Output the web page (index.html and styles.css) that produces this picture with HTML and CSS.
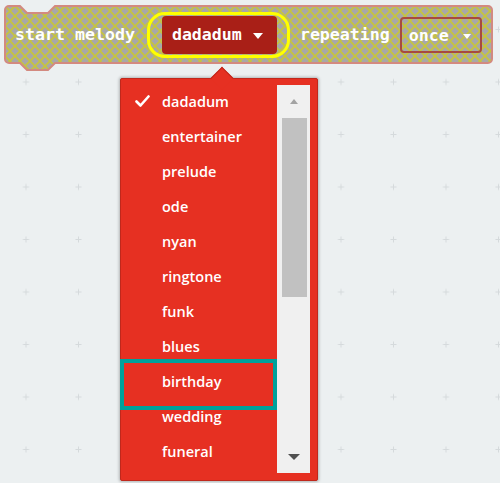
FILE: index.html
```html
<!DOCTYPE html>
<html>
<head>
<meta charset="utf-8">
<link rel="stylesheet" href="styles.css">
</head>
<body>
<div class="workspace">
  <svg class="grid" width="500" height="483">
    <defs>
      <pattern id="gridPat" x="-0.25" y="55.75" width="52.5" height="52.5" patternUnits="userSpaceOnUse">
        <path d="M23.25 26.25 H29.25 M26.25 23.25 V29.25" stroke="#d5dadc" stroke-width="1"/>
      </pattern>
    </defs>
    <rect width="500" height="483" fill="url(#gridPat)"/>
  </svg>

  <div class="block">
    <svg class="block-shape" width="491" height="70" viewBox="-2 -2 491 70">
      <defs>
        <pattern id="disabledPat" width="10" height="10" patternUnits="userSpaceOnUse">
          <rect width="10" height="10" fill="#a8a8a8"/>
          <path d="M0 0 L10 10 M10 0 L0 10" stroke="#c6c43e" stroke-width="1.7"/>
        </pattern>
      </defs>
      <path d="M0 4 A4 4 0 0 1 4 0 H15 L22 7 H43 L50 0 H483 A4 4 0 0 1 487 4 V53 A4 4 0 0 1 483 57 H50 L43 64 H22 L15 57 H4 A4 4 0 0 1 0 53 Z" fill="url(#disabledPat)" stroke="#d38a80" stroke-width="2"/>
    </svg>
    <div class="block-row">
      <span class="label">start melody</span>
      <span class="selected">
        <span class="field field-solid">dadadum<i class="caret"></i></span>
      </span>
      <span class="label">repeating</span>
      <span class="field field-outline">once<i class="caret"></i></span>
    </div>
  </div>

  <div class="dropdown">
    <div class="pointer"></div>
    <ul class="menu">
      <li class="item checked"><span class="check"><svg width="15" height="12" viewBox="0 0 15 12"><path d="M1.5 6.5 L5.5 10.5 L13.5 1.5" fill="none" stroke="#fff" stroke-width="2.6" stroke-linecap="round" stroke-linejoin="round"/></svg></span>dadadum</li>
      <li class="item"><span class="check"></span>entertainer</li>
      <li class="item"><span class="check"></span>prelude</li>
      <li class="item"><span class="check"></span>ode</li>
      <li class="item"><span class="check"></span>nyan</li>
      <li class="item"><span class="check"></span>ringtone</li>
      <li class="item"><span class="check"></span>funk</li>
      <li class="item"><span class="check"></span>blues</li>
      <li class="item"><span class="check"></span>birthday</li>
      <li class="item"><span class="check"></span>wedding</li>
      <li class="item"><span class="check"></span>funeral</li>
    </ul>
    <div class="scrollbar">
      <div class="sb-btn"><i class="arrow-up"></i></div>
      <div class="thumb"></div>
      <div class="sb-space"></div>
      <div class="sb-btn"><i class="arrow-down"></i></div>
    </div>
    <div class="highlight"></div>
  </div>
</div>
</body>
</html>
```

FILE: styles.css
```css
* { box-sizing: border-box; }

html, body {
  margin: 0;
  padding: 0;
}

body {
  width: 500px;
  height: 483px;
  overflow: hidden;
  background: #ecf0f1;
}

.workspace {
  position: relative;
  width: 500px;
  height: 483px;
}

.grid {
  position: absolute;
  left: 0;
  top: 0;
}

/* ---- block ---- */
.block {
  position: absolute;
  left: 5px;
  top: 6px;
  width: 487px;
  height: 57px;
}

.block-shape {
  position: absolute;
  left: -2px;
  top: -2px;
}

.block-row {
  position: relative;
  display: flex;
  align-items: center;
  height: 57px;
  padding-left: 10px;
  font-family: "DejaVu Sans Mono", "Liberation Mono", monospace;
  font-weight: bold;
  font-size: 16.6px;
  color: #fff;
  white-space: nowrap;
}

.label {
  display: block;
}

.label + .selected {
  margin-left: 12px;
}

.selected {
  display: flex;
  align-items: center;
  height: 46px;
  border: 3px solid #ffff00;
  border-radius: 18px;
  padding: 0 10px 0 12px;
  margin-top: 1px;
}

.selected + .label {
  margin-left: 10px;
}

.field {
  display: flex;
  align-items: center;
  border-radius: 4px;
}

.field-solid {
  height: 38px;
  width: 115px;
  padding-left: 10px;
  background: #a91f17;
  margin-top: -1px;
}

.field-outline {
  height: 36px;
  width: 82px;
  margin-left: 10px;
  padding-left: 7px;
  border: 2px solid #a84a3e;
  margin-top: 1px;
}

.caret {
  display: block;
  width: 0;
  height: 0;
  border-left: 5px solid transparent;
  border-right: 5px solid transparent;
  border-top: 6px solid #fff;
  margin-left: 11px;
  margin-top: 2px;
}

.field-outline .caret {
  margin-left: 14px;
  border-left-width: 4.5px;
  border-right-width: 4.5px;
  border-top-width: 5px;
}

/* ---- dropdown ---- */
.dropdown {
  position: absolute;
  left: 120px;
  top: 78px;
  width: 198px;
  height: 403px;
  display: flex;
  align-items: flex-start;
  background: #e63022;
  border: 1px solid #c0281c;
  border-radius: 2px;
  box-shadow: 0 0 3px 1px rgba(0, 0, 0, 0.25);
}

.pointer {
  position: absolute;
  left: 93px;
  top: -9px;
  width: 16px;
  height: 16px;
  background: #e63022;
  border-top: 1px solid #c0281c;
  border-left: 1px solid #c0281c;
  transform: rotate(45deg);
}

.menu {
  position: relative;
  list-style: none;
  margin: 0;
  padding: 5px 0 0 0;
  width: 156px;
  font-family: "Open Sans", "Noto Sans", sans-serif;
  font-size: 14.5px;
  font-weight: 600;
  color: #fff;
}

.item {
  display: flex;
  align-items: center;
  height: 35px;
  padding-left: 14px;
  white-space: nowrap;
}

.check {
  display: flex;
  align-items: center;
  width: 27px;
  height: 35px;
}

.check svg {
  display: block;
  margin-top: -1px;
}

.scrollbar {
  position: relative;
  width: 33px;
  height: 388px;
  margin-top: 6px;
  display: flex;
  flex-direction: column;
  background: #f0f0f0;
}

.sb-btn {
  height: 33px;
  display: flex;
  align-items: center;
  justify-content: center;
  flex: none;
}

.thumb {
  height: 179px;
  margin: 0 3px 0 5px;
  background: #c1c1c1;
  flex: none;
}

.sb-space {
  flex: 1;
}

.arrow-up {
  display: block;
  width: 0;
  height: 0;
  border-left: 4px solid transparent;
  border-right: 4px solid transparent;
  border-bottom: 5px solid #a3a3a3;
  margin-left: 1px;
}

.arrow-down {
  display: block;
  width: 0;
  height: 0;
  border-left: 6px solid transparent;
  border-right: 6px solid transparent;
  border-top: 6px solid #505050;
  margin-left: 1px;
}

.highlight {
  position: absolute;
  left: -1px;
  top: 280px;
  width: 157px;
  height: 51px;
  border: 4px solid #00a19b;
}
```
